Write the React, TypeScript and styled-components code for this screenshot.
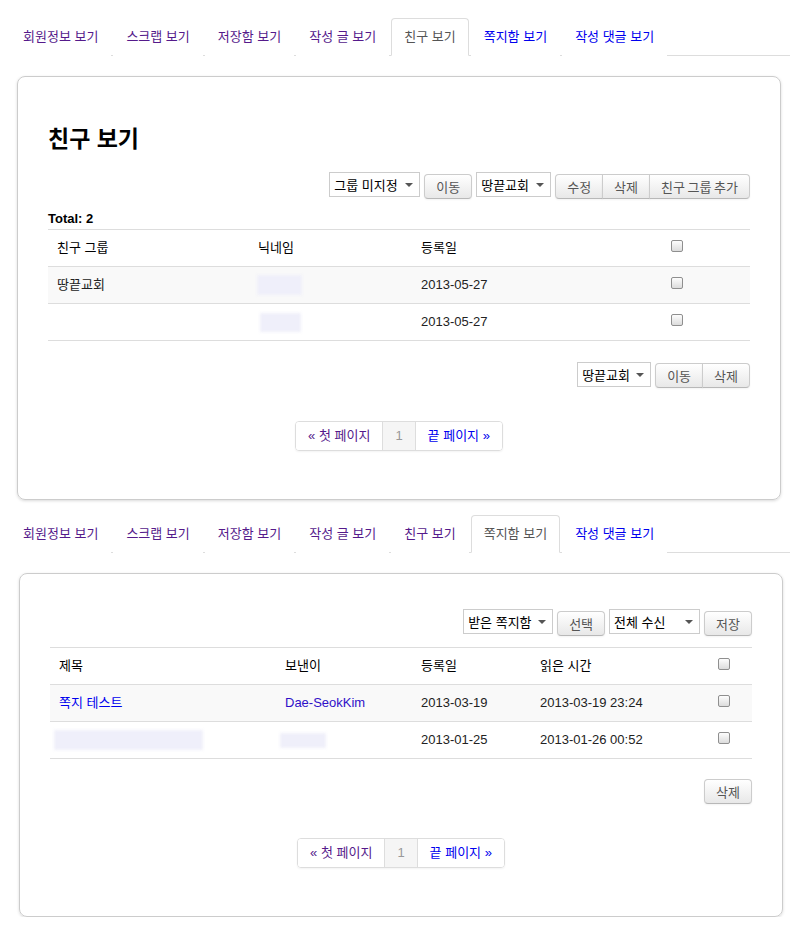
import styled, { createGlobalStyle } from 'styled-components'

const GlobalStyle = createGlobalStyle`
    * {
        box-sizing: border-box;
    }
    body {
        margin: 0;
        background: #fff;
        font-family: "Liberation Sans", "Noto Sans CJK KR", sans-serif;
        font-size: 13px;
        color: #222;
    }
`

const Page = styled.div`
    display: flex;
    flex-direction: column;
    padding-top: 18px;
`

const Section = styled.section<{ $gap: number }>`
    margin: ${(p) => p.$gap}px 0 0 10px;
    width: 780px;
`

const TabBar = styled.ul`
    display: flex;
    margin: 0;
    padding: 0;
    list-style: none;
    border-bottom: 1px solid #ddd;
`

const Tab = styled.li<{ $active?: boolean; $visited?: boolean }>`
    margin: 0 2px -1px 0;
    padding: 8px 12px;
    line-height: 20px;
    border: 1px solid ${(p) => (p.$active ? '#ddd' : 'transparent')};
    border-bottom-color: ${(p) => (p.$active ? '#fff' : 'transparent')};
    border-radius: 4px 4px 0 0;
    background: #fff;
    color: ${(p) => (p.$active ? '#555' : p.$visited ? '#551a8b' : '#0000ee')};
    cursor: pointer;
`

const Card = styled.div<{ $inset: number; $top: number }>`
    display: flex;
    flex-direction: column;
    width: 764px;
    margin: 20px 0 0 ${(p) => p.$inset}px;
    padding: ${(p) => p.$top}px 30px 48px;
    border: 1px solid #ccc;
    border-radius: 8px;
    box-shadow: 0 1px 3px rgba(0, 0, 0, 0.15);
`

const Title = styled.h1`
    margin: 12px 0 0;
    font-size: 23px;
    line-height: 40px;
    font-weight: bold;
    color: #000;
`

const Toolbar = styled.div<{ $top: number }>`
    display: flex;
    justify-content: flex-end;
    align-items: flex-start;
    gap: 4px;
    margin-top: ${(p) => p.$top}px;
`

const SelectBox = styled.div<{ $w: number }>`
    display: flex;
    align-items: center;
    justify-content: space-between;
    width: ${(p) => p.$w}px;
    height: 25px;
    padding: 0 6px 0 4px;
    border: 1px solid #ccc;
    background: #fff;
    color: #000;
`

const Caret = styled.span`
    width: 0;
    height: 0;
    border-left: 4px solid transparent;
    border-right: 4px solid transparent;
    border-top: 4px solid #555;
`

const Button = styled.button<{ $lower?: number }>`
    height: 25px;
    margin-top: ${(p) => p.$lower ?? 2}px;
    padding: 0 11px;
    font: inherit;
    word-spacing: -1px;
    color: #555;
    border: 1px solid #ccc;
    border-bottom-color: #b8b8b8;
    border-radius: 4px;
    background: linear-gradient(#fff, #e8e8e8);
    box-shadow: 0 1px 2px rgba(0, 0, 0, 0.05);
`

const ButtonGroup = styled.div<{ $lower?: number }>`
    display: flex;
    margin-top: ${(p) => p.$lower ?? 2}px;

    & > ${Button} {
        margin-top: 0;
        border-radius: 0;
    }
    & > ${Button} + ${Button} {
        margin-left: -1px;
    }
    & > ${Button}:first-child {
        border-radius: 4px 0 0 4px;
    }
    & > ${Button}:last-child {
        border-radius: 0 4px 4px 0;
    }
`

const Total = styled.div`
    margin-top: 10px;
    line-height: 20px;
    font-weight: bold;
    color: #000;
`

const Table = styled.div<{ $top: number }>`
    display: flex;
    flex-direction: column;
    margin-top: ${(p) => p.$top}px;
    border-bottom: 1px solid #ddd;
`

const Row = styled.div<{ $cols: string; $striped?: boolean }>`
    display: grid;
    grid-template-columns: ${(p) => p.$cols};
    border-top: 1px solid #ddd;
    background: ${(p) => (p.$striped ? '#f9f9f9' : 'transparent')};
`

const Cell = styled.div<{ $head?: boolean }>`
    display: flex;
    align-items: center;
    padding: 8px 9px;
    line-height: 20px;
    min-height: 36px;
    color: ${(p) => (p.$head ? '#000' : '#222')};
    white-space: nowrap;
`

const Link = styled.a<{ $visited?: boolean }>`
    color: ${(p) => (p.$visited ? '#3010c8' : '#0000ee')};
    text-decoration: none;
    cursor: pointer;
`

const Check = styled.span`
    display: inline-block;
    width: 12px;
    height: 12px;
    margin: 0 0 4px 0;
    border: 1px solid #8f8f8f;
    border-radius: 2px;
    background: linear-gradient(#fdfdfd, #dcdcdc);
`

const Blur = styled.span<{ $w: number; $h: number; $shift?: number }>`
    display: inline-block;
    width: ${(p) => p.$w}px;
    height: ${(p) => p.$h}px;
    margin-left: ${(p) => p.$shift ?? 0}px;
    background: #efeffa;
    filter: blur(1.5px);
`

const PagerWrap = styled.div<{ $top: number }>`
    display: flex;
    justify-content: center;
    margin-top: ${(p) => p.$top}px;
`

const Pager = styled.ul`
    display: flex;
    margin: 0;
    padding: 0;
    list-style: none;
    border: 1px solid #ddd;
    border-radius: 4px;
    box-shadow: 0 1px 2px rgba(0, 0, 0, 0.05);
    overflow: hidden;
`

const PageItem = styled.li<{ $current?: boolean; $visited?: boolean }>`
    padding: 0 12px;
    line-height: 28px;
    background: ${(p) => (p.$current ? '#f5f5f5' : '#fff')};
    color: ${(p) => (p.$current ? '#999' : p.$visited ? '#551a8b' : '#0000ee')};

    & + & {
        border-left: 1px solid #ddd;
    }
`

const TABS = ['회원정보 보기', '스크랩 보기', '저장함 보기', '작성 글 보기', '친구 보기', '쪽지함 보기', '작성 댓글 보기']

function Tabs({ active, visitedCount }: { active: number; visitedCount: number }) {
    return (
        <TabBar>
            {TABS.map((t, i) => (
                <Tab key={t} $active={i === active} $visited={i < visitedCount}>
                    {t}
                </Tab>
            ))}
        </TabBar>
    )
}

function Select({ label, width }: { label: string; width: number }) {
    return (
        <SelectBox $w={width}>
            {label}
            <Caret />
        </SelectBox>
    )
}

function Pagination({ top }: { top: number }) {
    return (
        <PagerWrap $top={top}>
            <Pager>
                <PageItem $visited>« 첫 페이지</PageItem>
                <PageItem $current>1</PageItem>
                <PageItem>끝 페이지 »</PageItem>
            </Pager>
        </PagerWrap>
    )
}

const FRIEND_COLS = '201px 163px 250px 88px'
const NOTE_COLS = '226px 136px 119px 178px 43px'

function FriendCard() {
    return (
        <Card $inset={7} $top={30}>
            <Title>친구 보기</Title>
            <Toolbar $top={13}>
                <Select label="그룹 미지정" width={91} />
                <Button>이동</Button>
                <Select label="땅끝교회" width={75} />
                <ButtonGroup>
                    <Button>수정</Button>
                    <Button>삭제</Button>
                    <Button>친구 그룹 추가</Button>
                </ButtonGroup>
            </Toolbar>
            <Total>Total: 2</Total>
            <Table $top={0}>
                <Row $cols={FRIEND_COLS}>
                    <Cell $head>친구 그룹</Cell>
                    <Cell $head>닉네임</Cell>
                    <Cell $head>등록일</Cell>
                    <Cell $head>
                        <Check />
                    </Cell>
                </Row>
                <Row $cols={FRIEND_COLS} $striped>
                    <Cell>땅끝교회</Cell>
                    <Cell>
                        <Blur $w={45} $h={20} $shift={-1} />
                    </Cell>
                    <Cell>2013-05-27</Cell>
                    <Cell>
                        <Check />
                    </Cell>
                </Row>
                <Row $cols={FRIEND_COLS}>
                    <Cell />
                    <Cell>
                        <Blur $w={41} $h={19} $shift={2} />
                    </Cell>
                    <Cell>2013-05-27</Cell>
                    <Cell>
                        <Check />
                    </Cell>
                </Row>
            </Table>
            <Toolbar $top={21}>
                <Select label="땅끝교회" width={74} />
                <ButtonGroup $lower={1}>
                    <Button>이동</Button>
                    <Button>삭제</Button>
                </ButtonGroup>
            </Toolbar>
            <Pagination top={33} />
        </Card>
    )
}

function NoteCard() {
    return (
        <Card $inset={9} $top={35}>
            <Toolbar $top={0}>
                <Select label="받은 쪽지함" width={90} />
                <Button>선택</Button>
                <Select label="전체 수신" width={91} />
                <Button>저장</Button>
            </Toolbar>
            <Table $top={11}>
                <Row $cols={NOTE_COLS}>
                    <Cell $head>제목</Cell>
                    <Cell $head>보낸이</Cell>
                    <Cell $head>등록일</Cell>
                    <Cell $head>읽은 시간</Cell>
                    <Cell $head>
                        <Check />
                    </Cell>
                </Row>
                <Row $cols={NOTE_COLS} $striped>
                    <Cell>
                        <Link>쪽지 테스트</Link>
                    </Cell>
                    <Cell>
                        <Link $visited>Dae-SeokKim</Link>
                    </Cell>
                    <Cell>2013-03-19</Cell>
                    <Cell>2013-03-19 23:24</Cell>
                    <Cell>
                        <Check />
                    </Cell>
                </Row>
                <Row $cols={NOTE_COLS}>
                    <Cell>
                        <Blur $w={149} $h={20} $shift={-5} />
                    </Cell>
                    <Cell>
                        <Blur $w={46} $h={15} $shift={-5} />
                    </Cell>
                    <Cell>2013-01-25</Cell>
                    <Cell>2013-01-26 00:52</Cell>
                    <Cell>
                        <Check />
                    </Cell>
                </Row>
            </Table>
            <Toolbar $top={20}>
                <Button $lower={0}>삭제</Button>
            </Toolbar>
            <Pagination top={34} />
        </Card>
    )
}

export default function App() {
    return (
        <>
            <GlobalStyle />
            <Page>
                <Section $gap={0}>
                    <Tabs active={4} visitedCount={4} />
                    <FriendCard />
                </Section>
                <Section $gap={15}>
                    <Tabs active={5} visitedCount={5} />
                    <NoteCard />
                </Section>
            </Page>
        </>
    )
}
